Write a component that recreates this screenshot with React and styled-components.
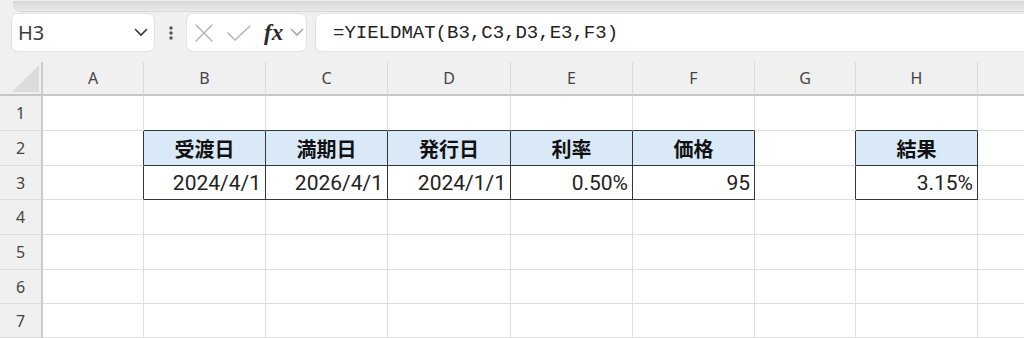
import React from 'react';
import styled, { createGlobalStyle } from 'styled-components';

const GlobalStyle = createGlobalStyle`
	html, body {
		margin: 0;
		padding: 0;
		background: #ffffff;
		overflow: hidden;
	}
	body {
		font-family: "Noto Sans", "Liberation Sans", sans-serif;
	}
`;

const Window = styled.div`
	width: 1024px;
	height: 338px;
	display: flex;
	flex-direction: column;
	background: #f0f0f0;
	overflow: hidden;
`;

const RibbonEdge = styled.div`
	height: 11px;
	margin: 1px 0 0 13px;
	background: linear-gradient(#d6d8da, #e7e9eb);
	border-bottom: 1px solid #d8d8d8;
	border-bottom-left-radius: 8px;
`;

const FormulaRow = styled.div`
	display: flex;
	align-items: center;
	height: 39px;
	margin: 1px 0 10px;
	padding-left: 11px;
`;

const Box = styled.div`
	box-sizing: border-box;
	height: 39px;
	background: #ffffff;
	border: 1px solid #e2e2e2;
	border-radius: 7px;
	display: flex;
	align-items: center;
`;

const NameBox = styled(Box)`
	width: 144px;
	padding: 0 6px 0 6px;
	justify-content: space-between;
	font-size: 20px;
	color: #3c3c3c;
`;

const Dots = styled.div`
	width: 31px;
	display: flex;
	justify-content: center;
`;

const ButtonBox = styled(Box)`
	width: 121px;
	padding-left: 8px;
`;

const IconSlot = styled.span`
	display: flex;
	align-items: center;
	margin-right: ${ props => props.$gap }px;
`;

const Fx = styled.span`
	font-family: "Liberation Serif", "DejaVu Serif", serif;
	font-style: italic;
	font-weight: bold;
	font-size: 23px;
	color: #2a2a2a;
	line-height: 1;
	margin-right: 7px;
`;

const FormulaInput = styled(Box)`
	flex: 1;
	margin-left: 8px;
	border-right: none;
	border-radius: 7px 0 0 7px;
	padding-left: 17px;
	font-family: "Liberation Mono", "DejaVu Sans Mono", monospace;
	font-size: 19px;
	color: #222222;
`;

const Sheet = styled.div`
	display: grid;
	grid-template-columns: 43px 101px 122px 122px 123px 122px 122px 101px 122px 122px;
	grid-template-rows: 34px 35px 35px 34px 35px 35px 34px 34px;
	background: #ffffff;
`;

const Corner = styled.div`
	box-sizing: border-box;
	background: #f0f0f0;
	border-right: 2px solid #cbcbcb;
	border-bottom: 2px solid #c6c6c6;
	display: flex;
	align-items: flex-end;
	justify-content: flex-end;
	padding: 0 2px 2px 0;
`;

const ColHead = styled.div`
	box-sizing: border-box;
	background: #f0f0f0;
	border-right: 1px solid #dadada;
	border-bottom: 2px solid #c6c6c6;
	display: flex;
	align-items: center;
	justify-content: center;
	font-size: 16px;
	color: #444444;
`;

const RowHead = styled.div`
	box-sizing: border-box;
	background: #f0f0f0;
	border-right: 2px solid #cbcbcb;
	border-bottom: 1px solid #dcdcdc;
	display: flex;
	align-items: center;
	justify-content: center;
	font-size: 16px;
	color: #444444;
`;

const Cell = styled.div`
	box-sizing: border-box;
	border-right: 1px solid ${ props => props.$darkRight ? '#353535' : '#dedede' };
	border-bottom: 1px solid ${ props => props.$darkBottom ? '#353535' : '#dedede' };
	background: ${ props => props.$title ? '#dae9f8' : '#ffffff' };
	display: flex;
	align-items: center;
	justify-content: ${ props => props.$title ? 'center' : 'flex-end' };
	padding: 0 4px 0 4px;
	font-family: ${ props => props.$title
		? '"Noto Sans CJK JP", "Noto Sans", sans-serif'
		: 'Roboto, "Liberation Sans", sans-serif' };
	font-weight: ${ props => props.$title ? 'bold' : 'normal' };
	font-size: ${ props => props.$title ? '20px' : '21px' };
	color: ${ props => props.$title ? '#111111' : '#222222' };
	white-space: nowrap;
`;

// the last column runs past the window edge, so its letter is not shown
const COLS = [ 'A', 'B', 'C', 'D', 'E', 'F', 'G', 'H', '' ];
const ROWS = [ 1, 2, 3, 4, 5, 6, 7 ];

const VALUES = {
	B2: '受渡日', C2: '満期日', D2: '発行日', E2: '利率', F2: '価格', H2: '結果',
	B3: '2024/4/1', C3: '2026/4/1', D3: '2024/1/1', E3: '0.50%', F3: '95', H3: '3.15%',
};

// cells that carry the thin black table border
const inTable = ( col, row ) => {
	if ( row < 2 || row > 3 ) return false;
	return ( col >= 1 && col <= 5 ) || col === 7;
};

const Chevron = ({ color, width = 14 }) => (
	<svg width={ width } height="9" viewBox="0 0 14 9">
		<path d="M1.5 1.5 L7 7 L12.5 1.5" fill="none" stroke={ color } strokeWidth="1.6" strokeLinecap="round"/>
	</svg>
);

const App = () => {
	return (
		<Window>
			<GlobalStyle/>
			<RibbonEdge/>
			<FormulaRow>
				<NameBox>
					<span>H3</span>
					<Chevron color='#333333'/>
				</NameBox>
				<Dots>
					<svg width="6" height="14" viewBox="0 0 6 14">
						<circle cx="3" cy="2" r="1.7" fill="#555555"/>
						<circle cx="3" cy="7" r="1.7" fill="#555555"/>
						<circle cx="3" cy="12" r="1.7" fill="#555555"/>
					</svg>
				</Dots>
				<ButtonBox>
					<IconSlot $gap={ 14 }>
						<svg width="18" height="18" viewBox="0 0 18 18">
							<path d="M1 1 L17 17 M17 1 L1 17" stroke="#b4b4b4" strokeWidth="1.4" strokeLinecap="round"/>
						</svg>
					</IconSlot>
					<IconSlot $gap={ 13 }>
						<svg width="24" height="16" viewBox="0 0 24 16">
							<path d="M1 8 L8 15 L23 1" fill="none" stroke="#b4b4b4" strokeWidth="1.4" strokeLinecap="round"/>
						</svg>
					</IconSlot>
					<Fx>fx</Fx>
					<Chevron color='#a8a8a8' width={ 14 }/>
				</ButtonBox>
				<FormulaInput>=YIELDMAT(B3,C3,D3,E3,F3)</FormulaInput>
			</FormulaRow>
			<Sheet>
				<Corner>
					<svg width="27" height="27" viewBox="0 0 27 27">
						<path d="M27 0 L27 27 L0 27 Z" fill="#dcdcdc"/>
					</svg>
				</Corner>
				{ COLS.map( ( c, ci ) => <ColHead key={ ci }>{ c }</ColHead> ) }
				{ ROWS.map( r => (
					<React.Fragment key={ r }>
						<RowHead>{ r }</RowHead>
						{ COLS.map( ( c, ci ) => {
							const id = c + r;
							const darkRight = inTable( ci, r ) || inTable( ci + 1, r );
							const darkBottom = inTable( ci, r ) || inTable( ci, r + 1 );
							return (
								<Cell
									key={ ci }
									$title={ r === 2 && inTable( ci, r ) }
									$darkRight={ darkRight }
									$darkBottom={ darkBottom }
								>
									{ VALUES[ id ] }
								</Cell>
							);
						} ) }
					</React.Fragment>
				) ) }
			</Sheet>
		</Window>
	);
};

export default App;
